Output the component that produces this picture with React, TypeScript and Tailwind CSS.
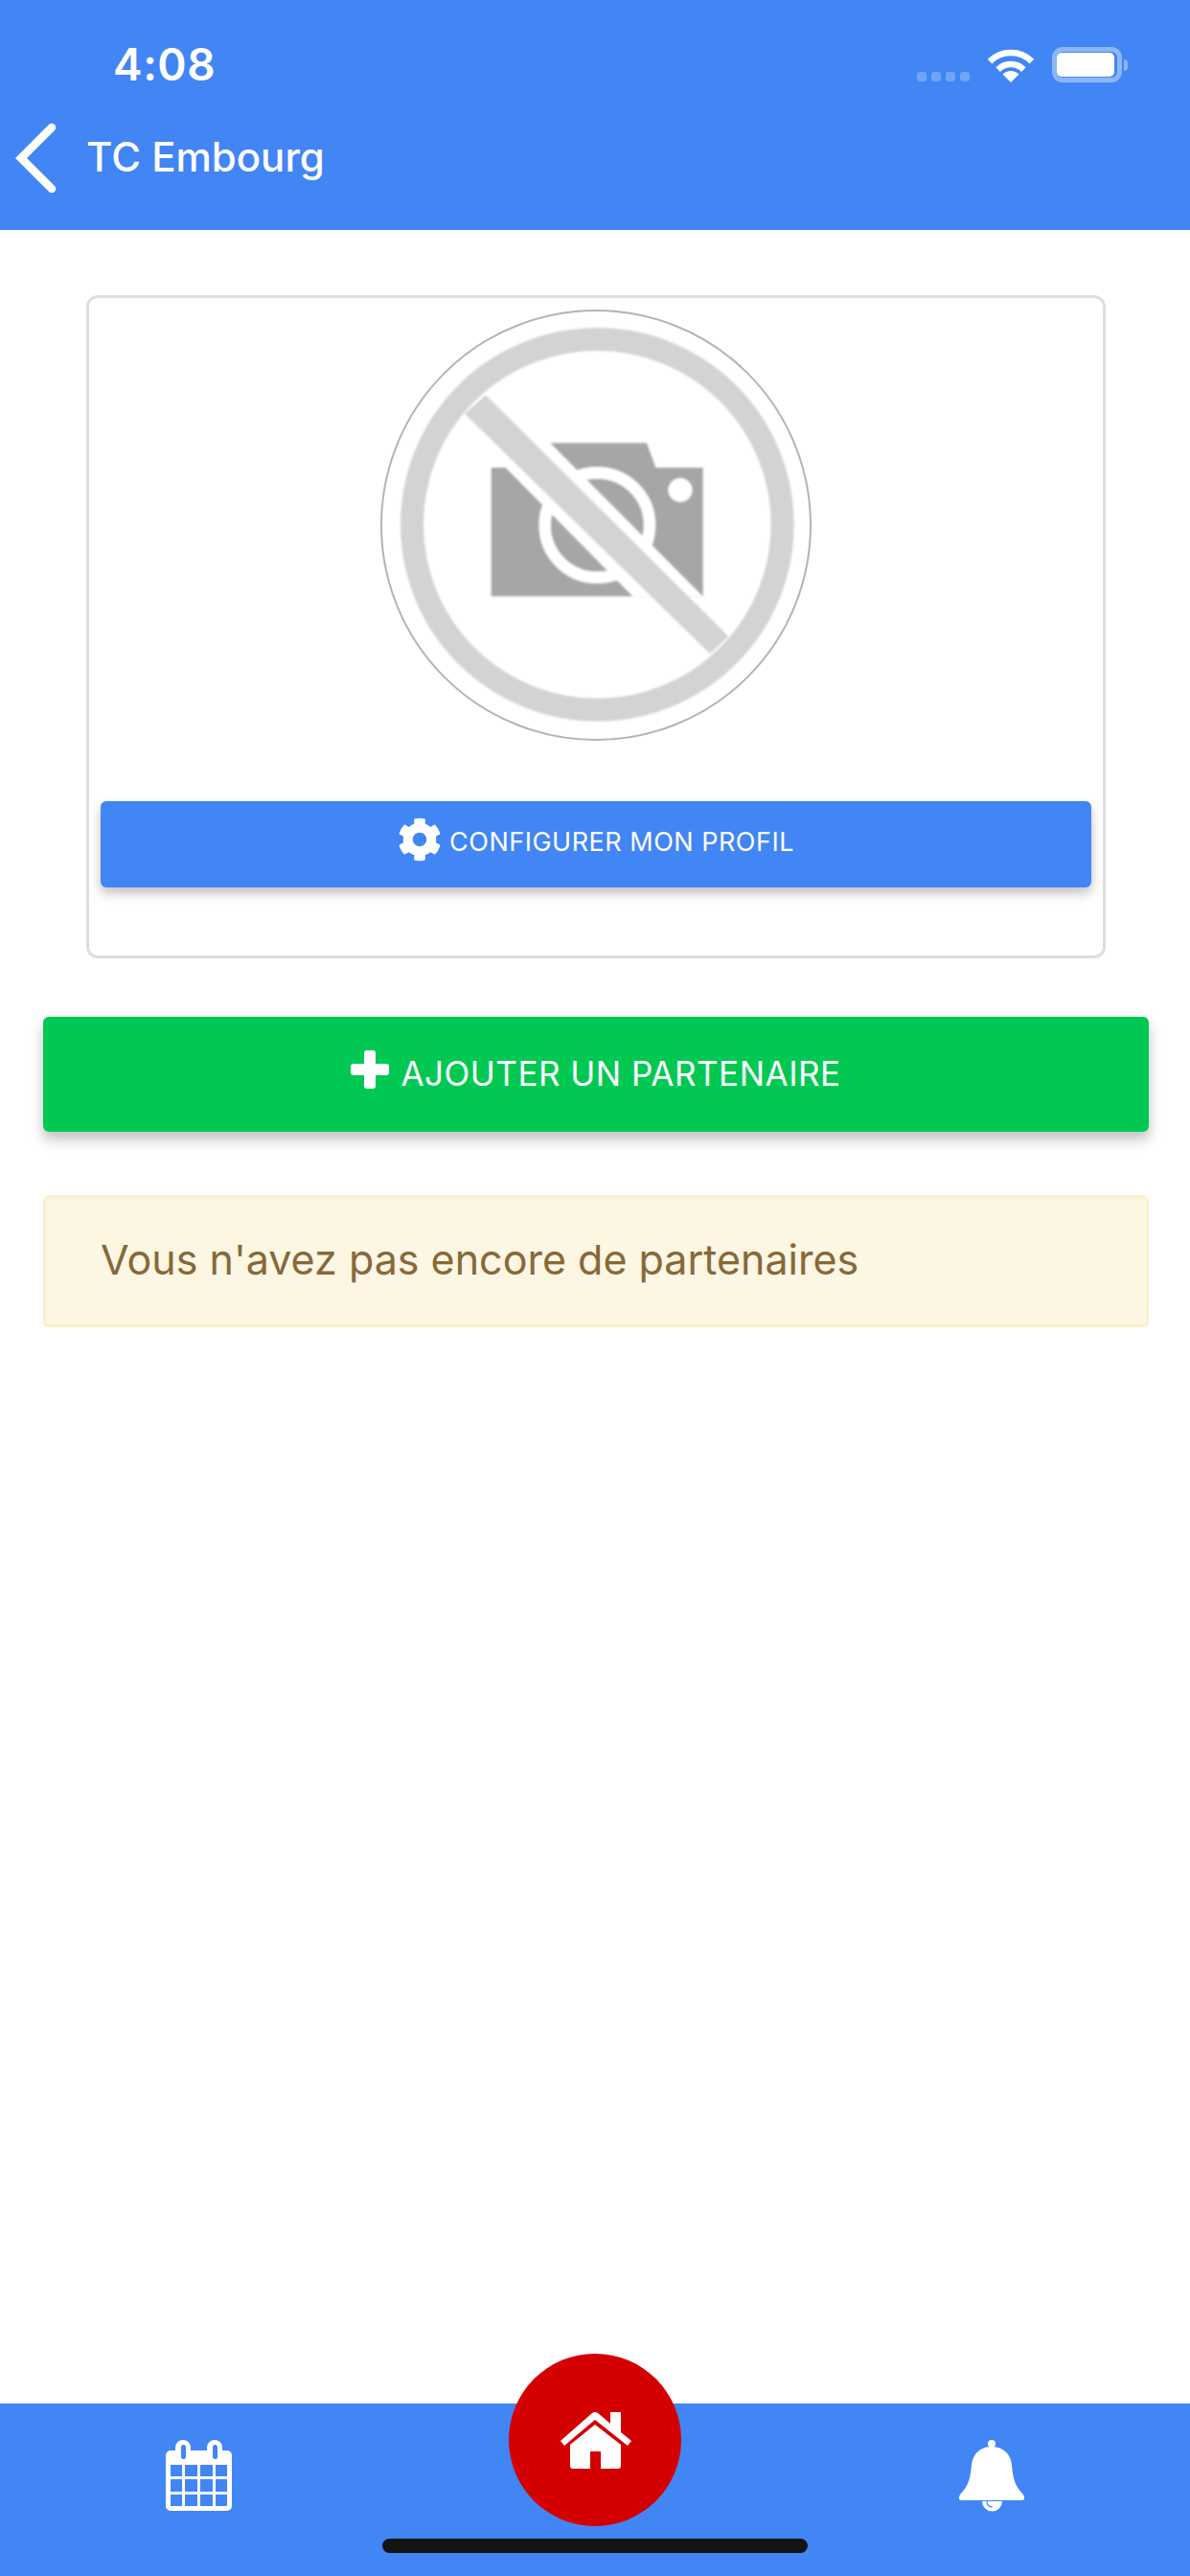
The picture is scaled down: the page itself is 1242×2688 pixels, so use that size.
import React from 'react';
import { FaCog } from 'react-icons/fa';

const StatusIcons: React.FC = () => (
  <div className="flex items-end">
    <div className="flex gap-[5px] mb-[1px]">
      <span className="block w-[10px] h-[10px] rounded-[3px] bg-white/25" />
      <span className="block w-[10px] h-[10px] rounded-[3px] bg-white/25" />
      <span className="block w-[10px] h-[10px] rounded-[3px] bg-white/25" />
      <span className="block w-[10px] h-[10px] rounded-[3px] bg-white/25" />
    </div>
    <svg className="ml-[19px]" width="48" height="37" viewBox="0 0 48 37" fill="none">
      <path d="M2.1 15.1A31 31 0 0 1 45.9 15.1" stroke="white" strokeWidth="6.5" />
      <path d="M10.6 23.6A19 19 0 0 1 37.4 23.6" stroke="white" strokeWidth="6.5" />
      <path d="M24 37L15.5 28.5A12 12 0 0 1 32.5 28.5Z" fill="white" />
    </svg>
    <div className="ml-[19px] flex items-center">
      <div className="w-[73px] h-[37px] rounded-[11px] border-[5px] border-white/40 flex">
        <div className="w-[60px] h-[25px] m-[1px] -ml-[0px] rounded-[5px] bg-white" />
      </div>
      <div className="ml-[2px] w-[4px] h-[12px] rounded-r-full bg-white/40" />
    </div>
  </div>
);

const NoPhoto: React.FC = () => (
  <div className="w-[450px] h-[450px] rounded-full border-2 border-[#b4b4b4] overflow-hidden bg-white">
    <svg className="block blur-[1px]" width="446" height="446" viewBox="84 76 1338 1338">
      <circle cx="757" cy="743" r="580" fill="none" stroke="#d3d3d3" strokeWidth="72" />
      <path d="M425 565H655L610 488H912L940 565H1088V968H425Z" fill="#a6a6a6" />
      <circle cx="757" cy="745" r="164" fill="#a6a6a6" stroke="white" strokeWidth="38" />
      <circle cx="1017" cy="635" r="38" fill="white" />
      <path d="M470 565L868 968H1088L610 488Z" fill="white" />
      <path d="M408 338L1168 1093L1110 1148L342 396Z" fill="#d3d3d3" />
    </svg>
  </div>
);

const PlusIcon: React.FC = () => (
  <svg className="mb-[8px]" width="40" height="40" viewBox="0 0 40 40" fill="white">
    <rect x="14" y="0" width="12" height="40" rx="3" />
    <rect x="0" y="14" width="40" height="12" rx="3" />
  </svg>
);

const CalendarIcon: React.FC = () => (
  <svg width="120" height="120" viewBox="0 0 120 120">
    <path d="M28 37H33V34A8 8 0 0 1 49 34V37H66V34A8 8 0 0 1 82 34V37H87A5 5 0 0 1 92 42V95A5 5 0 0 1 87 100H28A5 5 0 0 1 23 95V42A5 5 0 0 1 28 37Z" fill="white" />
    <rect x="39" y="31" width="5" height="15" rx="2.5" fill="#4285f4" />
    <rect x="72" y="31" width="5" height="15" rx="2.5" fill="#4285f4" />
    <g fill="#4285f4">
      <rect x="28" y="52" width="12" height="12" />
      <rect x="43" y="52" width="13" height="12" />
      <rect x="59" y="52" width="13" height="12" />
      <rect x="75" y="52" width="12" height="12" />
      <rect x="28" y="67" width="12" height="13" />
      <rect x="43" y="67" width="13" height="13" />
      <rect x="59" y="67" width="13" height="13" />
      <rect x="75" y="67" width="12" height="13" />
      <rect x="28" y="83" width="12" height="12" />
      <rect x="43" y="83" width="13" height="12" />
      <rect x="59" y="83" width="13" height="12" />
      <rect x="75" y="83" width="12" height="12" />
    </g>
  </svg>
);

const HomeIcon: React.FC = () => (
  <svg className="mt-[8px] mr-[2px]" width="120" height="120" viewBox="0 0 120 120" fill="white">
    <path d="M25 57L58 28Q61 26 64 28L77 39V27H88V48L99 57L95 62L61 35L29 62Z" />
    <path d="M61 40L35 61V83Q35 86 38 86H56V68H67V86H85Q88 86 88 83V61Z" />
  </svg>
);

const BellIcon: React.FC = () => (
  <svg width="120" height="120" viewBox="0 0 120 120" fill="white">
    <circle cx="60" cy="30" r="4" />
    <path d="M60 33C47 33 40 42 39 52C38 65 36 74 27 83Q24 89 29 89H91Q96 89 93 83C84 74 82 65 81 52C80 42 73 33 60 33Z" />
    <path d="M50 90A10.500 10.500 0 0 0 71 90Z" />
    <path d="M55 90Q55 96 61 96" fill="none" stroke="#4285f4" strokeWidth="1.200" />
  </svg>
);

export default function App() {
  return (
    <div className="h-[2688px] flex flex-col bg-white font-['Inter','Liberation_Sans',sans-serif]">
      <header className="h-[240px] bg-[#4285f4] text-white shrink-0">
        <div className="h-[127px] pl-[118px] pr-[65px] flex justify-between items-start pt-[49px]">
          <span className="text-[46px] leading-[37px] font-semibold tracking-[0.5px]">4:08</span>
          <StatusIcons />
        </div>
        <div className="flex items-center h-[76px]">
          <svg className="ml-[12px] shrink-0" width="52" height="80" viewBox="12 125 52 80" fill="none">
            <path d="M54 133L22 165L54 197" stroke="white" strokeWidth="8.500" strokeLinecap="round" />
          </svg>
          <span className="ml-[26px] mb-[2px] text-[42px] leading-none font-medium">TC Embourg</span>
        </div>
      </header>

      <main className="flex-1 pt-[68px] pl-[45px] pr-[43px]">
        <div className="mx-[45px] h-[692px] rounded-[12px] border-[3px] border-[#dedede] px-[12px] pt-[12px]">
          <div className="flex justify-center">
            <NoPhoto />
          </div>
          <button className="mt-[63px] w-full h-[90px] pb-[4px] rounded-[6px] bg-[#4285f4] text-white shadow-[0_6px_12px_rgba(0,0,0,0.25)] flex items-center justify-center gap-[8px] text-[27px] tracking-[0.5px]">
            <FaCog className="w-[46px] h-[46px] mb-[7px]" />
            CONFIGURER MON PROFIL
          </button>
        </div>

        <button className="mt-[61px] w-full h-[120px] pb-[2px] rounded-[6px] bg-[#00c853] text-white shadow-[0_8px_14px_rgba(0,0,0,0.25)] flex items-center justify-center gap-[12px] text-[35px] tracking-[0.5px]">
          <PlusIcon />
          AJOUTER UN PARTENAIRE
        </button>

        <div className="mt-[66px] h-[138px] pb-[3px] rounded-[6px] border-[3px] border-[#faf0cd] bg-[#fdf6e3] pl-[57px] flex items-center text-[43px] text-[#866939]">
          Vous n'avez pas encore de partenaires
        </div>
      </main>

      <footer className="relative h-[180px] shrink-0 bg-[#4285f4] flex justify-between items-start pl-[150px] pr-[147px] pt-[12px]">
        <CalendarIcon />
        <BellIcon />
        <div className="absolute left-[531px] -top-[52px] w-[180px] h-[180px] rounded-full bg-[#d40000] flex items-center justify-center">
          <HomeIcon />
        </div>
        <div className="absolute left-[399px] top-[141px] w-[444px] h-[15px] rounded-full bg-[#141414]" />
      </footer>
    </div>
  );
}
